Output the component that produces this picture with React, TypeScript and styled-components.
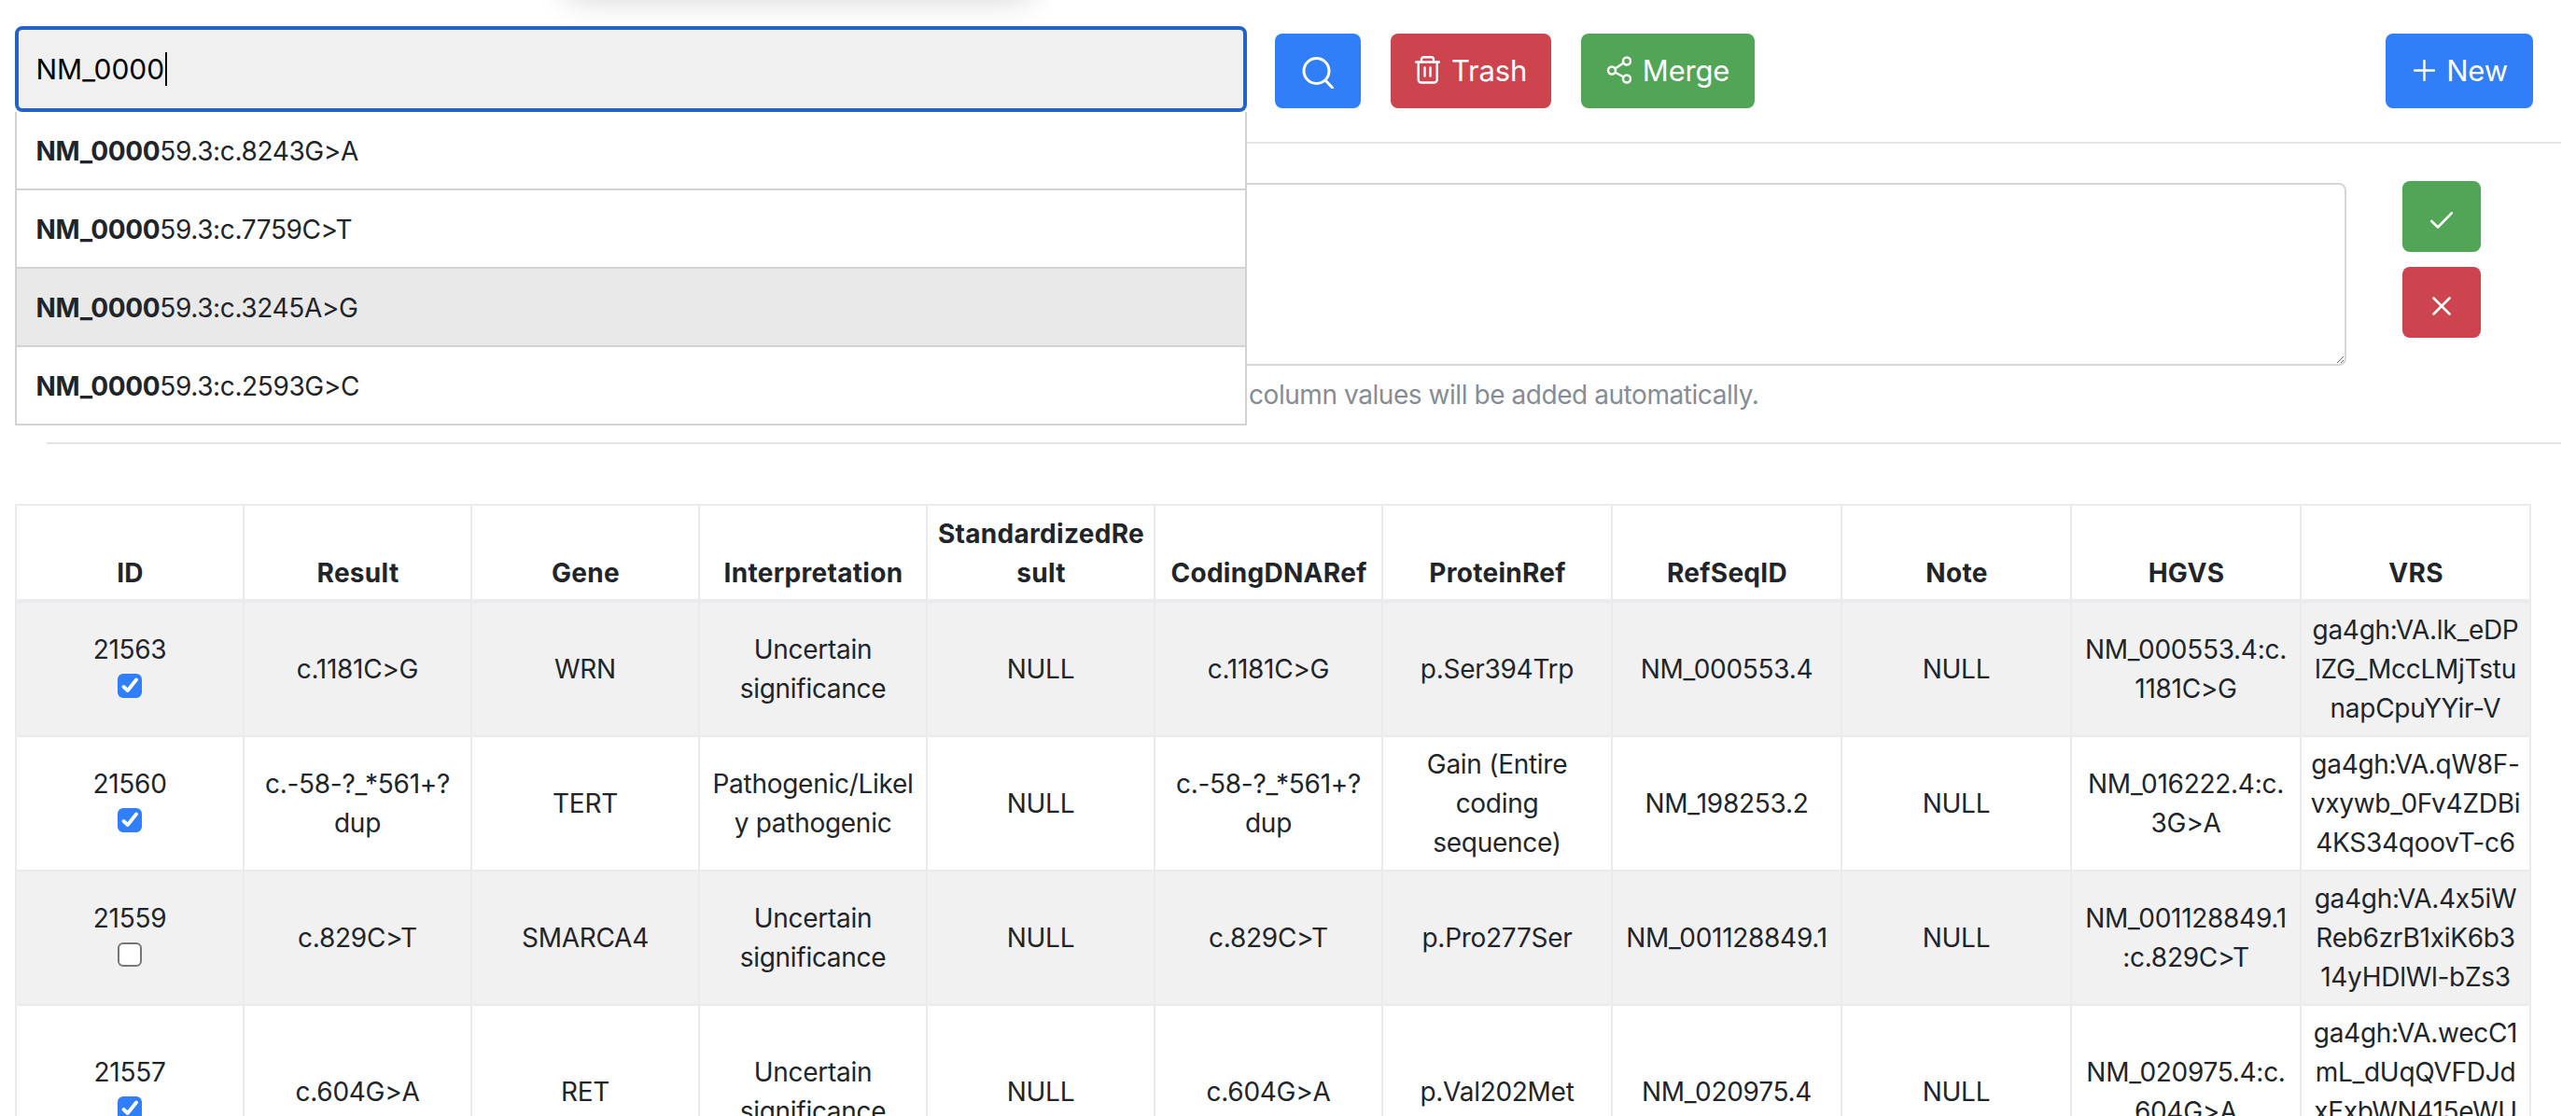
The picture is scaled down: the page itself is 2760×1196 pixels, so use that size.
import React from 'react';
import styled, { createGlobalStyle } from 'styled-components';

const GlobalStyle = createGlobalStyle`
  html, body {
    margin: 0;
    padding: 0;
    height: 100%;
    overflow: hidden;
    background: #fff;
  }
  body {
    font-family: Inter, "Liberation Sans", sans-serif;
    font-size: 28px;
    line-height: 42px;
    letter-spacing: -0.44px;
    font-feature-settings: "calt" 0;
    color: #212529;
  }
  * { box-sizing: border-box; }
`;

const Page = styled.div`
  position: relative;
  width: 2760px;
  height: 1196px;
  overflow: hidden;
`;

const TopShadow = styled.div`
  position: absolute;
  top: -60px;
  left: 606px;
  width: 500px;
  height: 52px;
  border-radius: 12px;
  box-shadow: 0 8px 34px rgba(0, 0, 0, 0.16);
`;

const Toolbar = styled.div`
  display: flex;
  align-items: flex-start;
  padding: 28px 46px 32px 16px;
`;

const SearchBox = styled.div`
  position: relative;
  width: 1320px;
  flex: none;
  margin-right: 30px;
`;

const SearchField = styled.div`
  height: 92px;
  display: flex;
  align-items: center;
  padding-left: 18.5px;
  background: #f0f0f0;
  border: 4px solid #2363c7;
  border-radius: 8px;
  font-size: 30px;
  letter-spacing: 0;
  color: #000;
`;

const Caret = styled.span`
  width: 2px;
  height: 36px;
  margin-left: 1px;
  background: #000;
`;

const Suggestions = styled.div`
  position: absolute;
  top: 92px;
  left: 0;
  right: 0;
  z-index: 2;
  background: #fff;
  border-left: 2px solid #d2d2d2;
  border-right: 2px solid #d2d2d2;
`;

const Suggestion = styled.div<{ $active?: boolean }>`
  height: 84px;
  padding: 2px 0 0 20.5px;
  display: flex;
  align-items: center;
  border-bottom: 2px solid #d2d2d2;
  background: ${(p) => (p.$active ? '#e9e9e9' : '#fff')};
  letter-spacing: -0.38px;
  white-space: pre;
  b { font-weight: 700; }
`;

const Button = styled.button<{ $color: string; $gap?: number }>`
  height: 80px;
  margin-top: 8px;
  display: inline-flex;
  align-items: center;
  justify-content: center;
  gap: ${(p) => p.$gap ?? 12}px;
  padding: 0 0 2px;
  border: none;
  border-radius: 8px;
  background: ${(p) => p.$color};
  color: #fff;
  font-family: inherit;
  font-size: 31px;
  font-feature-settings: "calt" 0;
  letter-spacing: -0.2px;
  line-height: 1;
`;

const SearchButton = styled(Button)`
  width: 92px;
  margin-right: 32px;
  svg { margin-top: 6px; }
`;

const TrashButton = styled(Button)`
  width: 172px;
  margin-right: 32px;
`;

const MergeButton = styled(Button)`
  width: 186px;
`;

const NewButton = styled(Button)`
  width: 158px;
  margin-left: auto;
  padding-left: 3px;
`;

const Divider = styled.hr`
  height: 2px;
  margin: 0 16px 0 50px;
  border: none;
  background: #e3e3e3;
`;

const Editor = styled.div`
  display: flex;
  align-items: flex-start;
  padding: 40px 102px 30px 50px;
`;

const EditorMain = styled.div`
  flex: 1;
  min-width: 0;
  padding-top: 2px;
`;

const NoteArea = styled.textarea`
  display: block;
  width: 100%;
  height: 196px;
  border: 2px solid #d6d6d6;
  border-radius: 8px;
  background: #fff;
  outline: none;
  resize: vertical;
`;

const Helper = styled.div`
  margin-top: 10px;
  padding-left: 1288px;
  color: #868c94;
  white-space: nowrap;
`;

const EditorActions = styled.div`
  flex: none;
  width: 84px;
  margin-left: 60px;
  display: flex;
  flex-direction: column;
  gap: 16px;
`;

const ActionButton = styled.button<{ $color: string }>`
  height: 76px;
  display: flex;
  align-items: center;
  justify-content: center;
  padding: 7px 0 0;
  border: none;
  border-radius: 8px;
  background: ${(p) => p.$color};
`;

const TableWrap = styled.div`
  padding: 64px 0 0 16px;
`;

const Table = styled.table`
  width: 2696px;
  table-layout: fixed;
  border-collapse: collapse;
  text-align: center;
`;

const HeadCell = styled.th`
  padding: 9px 8px 7px 9px;
  border: 2px solid #ebebef;
  border-bottom-width: 4px;
  font-weight: 700;
  letter-spacing: 0.3px;
  vertical-align: bottom;
  white-space: pre-line;
`;

const Row = styled.tr<{ $striped: boolean }>`
  background: ${(p) => (p.$striped ? '#f1f1f2' : '#fff')};
`;

const Cell = styled.td`
  padding: 8px;
  border: 2px solid #ebebef;
  letter-spacing: -0.28px;
  vertical-align: middle;
  white-space: pre-line;
`;

const CheckLine = styled.div`
  height: 42px;
  padding-top: 5px;
  display: flex;
  justify-content: center;
`;

const CheckBox = styled.span<{ $checked: boolean }>`
  width: 26px;
  height: 26px;
  display: flex;
  align-items: center;
  justify-content: center;
  border-radius: 6px;
  border: 2px solid ${(p) => (p.$checked ? '#307ef8' : '#767676')};
  background: ${(p) => (p.$checked ? '#307ef8' : '#fff')};
`;

const SearchIcon = () => (
  <svg width="34" height="34" viewBox="0 0 34 34" fill="none" stroke="#fff" strokeWidth="3" strokeLinecap="round">
    <circle cx="15.5" cy="15" r="13.5" />
    <path d="M25.5 25.5 L32.5 33" />
  </svg>
);

const TrashIcon = () => (
  <svg width="27" height="30" viewBox="0 0 27 30" fill="none" stroke="#fff" strokeWidth="2.4" strokeLinecap="round" strokeLinejoin="round">
    <path d="M1.2 6.5 H26" />
    <path d="M7 6.5 V3.7 a2.5 2.5 0 0 1 2.5 -2.5 h8 a2.5 2.5 0 0 1 2.5 2.5 V6.5" />
    <path d="M3.7 6.5 V25.5 a3 3 0 0 0 3 3 h14 a3 3 0 0 0 3 -3 V6.5" />
    <path d="M10.5 12.5 V21.5 M16.5 12.5 V21.5" />
  </svg>
);

const ShareIcon = () => (
  <svg width="27" height="30" viewBox="0 0 27 30" fill="none" stroke="#fff" strokeWidth="2.4" strokeLinecap="round">
    <circle cx="6" cy="15.5" r="4" />
    <circle cx="22" cy="5.5" r="4" />
    <circle cx="22" cy="24.5" r="4" />
    <path d="M9.5 13.5 L18.5 7.5 M9.5 17.5 L18.5 22.5" />
  </svg>
);

const PlusIcon = () => (
  <svg width="23" height="23" viewBox="0 0 23 23" fill="none" stroke="#fff" strokeWidth="2.4" strokeLinecap="round">
    <path d="M11.5 1 V22 M1 11.5 H22" />
  </svg>
);

const CheckIcon = () => (
  <svg width="24" height="18" viewBox="0 0 24 18" fill="none" stroke="#fff" strokeWidth="2.6" strokeLinecap="round" strokeLinejoin="round">
    <path d="M1.3 10 L8 16.5 L22.8 1.3" />
  </svg>
);

const CloseIcon = () => (
  <svg width="20" height="20" viewBox="0 0 20 20" fill="none" stroke="#fff" strokeWidth="2.6" strokeLinecap="round">
    <path d="M1.5 1.5 L18.5 18.5 M18.5 1.5 L1.5 18.5" />
  </svg>
);

const TickMark = () => (
  <svg width="18" height="18" viewBox="0 0 18 18" fill="none" stroke="#fff" strokeWidth="3.8" strokeLinecap="round" strokeLinejoin="round">
    <path d="M2.5 10 L6.8 14 L16 2.5" />
  </svg>
);

const suggestions = ['59.3:c.8243G>A', '59.3:c.7759C>T', '59.3:c.3245A>G', '59.3:c.2593G>C'];

const columns = [
  { title: 'ID', width: 244 },
  { title: 'Result', width: 244 },
  { title: 'Gene', width: 244 },
  { title: 'Interpretation', width: 244 },
  { title: 'StandardizedRe\nsult', width: 244 },
  { title: 'CodingDNARef', width: 244 },
  { title: 'ProteinRef', width: 246 },
  { title: 'RefSeqID', width: 246 },
  { title: 'Note', width: 246 },
  { title: 'HGVS', width: 246 },
  { title: 'VRS', width: 246 },
];

const rows = [
  {
    id: '21563', checked: true,
    cells: ['c.1181C>G', 'WRN', 'Uncertain\nsignificance', 'NULL', 'c.1181C>G', 'p.Ser394Trp', 'NM_000553.4', 'NULL', 'NM_000553.4:c.\n1181C>G', 'ga4gh:VA.lk_eDP\nlZG_MccLMjTstu\nnapCpuYYir-V'],
  },
  {
    id: '21560', checked: true,
    cells: ['c.-58-?_*561+?\ndup', 'TERT', 'Pathogenic/Likel\ny pathogenic', 'NULL', 'c.-58-?_*561+?\ndup', 'Gain (Entire\ncoding\nsequence)', 'NM_198253.2', 'NULL', 'NM_016222.4:c.\n3G>A', 'ga4gh:VA.qW8F-\nvxywb_0Fv4ZDBi\n4KS34qoovT-c6'],
  },
  {
    id: '21559', checked: false,
    cells: ['c.829C>T', 'SMARCA4', 'Uncertain\nsignificance', 'NULL', 'c.829C>T', 'p.Pro277Ser', 'NM_001128849.1', 'NULL', 'NM_001128849.1\n:c.829C>T', 'ga4gh:VA.4x5iW\nReb6zrB1xiK6b3\n14yHDlWl-bZs3'],
  },
  {
    id: '21557', checked: true,
    cells: ['c.604G>A', 'RET', 'Uncertain\nsignificance', 'NULL', 'c.604G>A', 'p.Val202Met', 'NM_020975.4', 'NULL', 'NM_020975.4:c.\n604G>A', 'ga4gh:VA.wecC1\nmL_dUqQVFDJd\nxExbWN415eWU\nv'],
  },
];

export default function App() {
  return (
    <Page>
      <GlobalStyle />
      <TopShadow />
      <Toolbar>
        <SearchBox>
          <SearchField>
            NM_0000
            <Caret />
          </SearchField>
          <Suggestions>
            {suggestions.map((s, i) => (
              <Suggestion key={s} $active={i === 2}>
                <b>NM_0000</b>
                {s}
              </Suggestion>
            ))}
          </Suggestions>
        </SearchBox>
        <SearchButton $color="#307ef8" aria-label="Search">
          <SearchIcon />
        </SearchButton>
        <TrashButton $color="#cc444d">
          <TrashIcon />
          Trash
        </TrashButton>
        <MergeButton $color="#52a556">
          <ShareIcon />
          Merge
        </MergeButton>
        <NewButton $color="#307ef8">
          <PlusIcon />
          New
        </NewButton>
      </Toolbar>
      <Divider />
      <Editor>
        <EditorMain>
          <NoteArea />
          <Helper>column values will be added automatically.</Helper>
        </EditorMain>
        <EditorActions>
          <ActionButton $color="#52a556" aria-label="Confirm">
            <CheckIcon />
          </ActionButton>
          <ActionButton $color="#cc444d" aria-label="Cancel">
            <CloseIcon />
          </ActionButton>
        </EditorActions>
      </Editor>
      <Divider />
      <TableWrap>
        <Table>
          <colgroup>
            {columns.map((c) => (
              <col key={c.title} style={{ width: c.width }} />
            ))}
          </colgroup>
          <thead>
            <tr>
              {columns.map((c) => (
                <HeadCell key={c.title}>{c.title}</HeadCell>
              ))}
            </tr>
          </thead>
          <tbody>
            {rows.map((r, i) => (
              <Row key={r.id} $striped={i % 2 === 0}>
                <Cell>
                  {r.id}
                  <CheckLine>
                    <CheckBox $checked={r.checked}>{r.checked && <TickMark />}</CheckBox>
                  </CheckLine>
                </Cell>
                {r.cells.map((c, j) => (
                  <Cell key={j}>{c}</Cell>
                ))}
              </Row>
            ))}
          </tbody>
        </Table>
      </TableWrap>
    </Page>
  );
}
